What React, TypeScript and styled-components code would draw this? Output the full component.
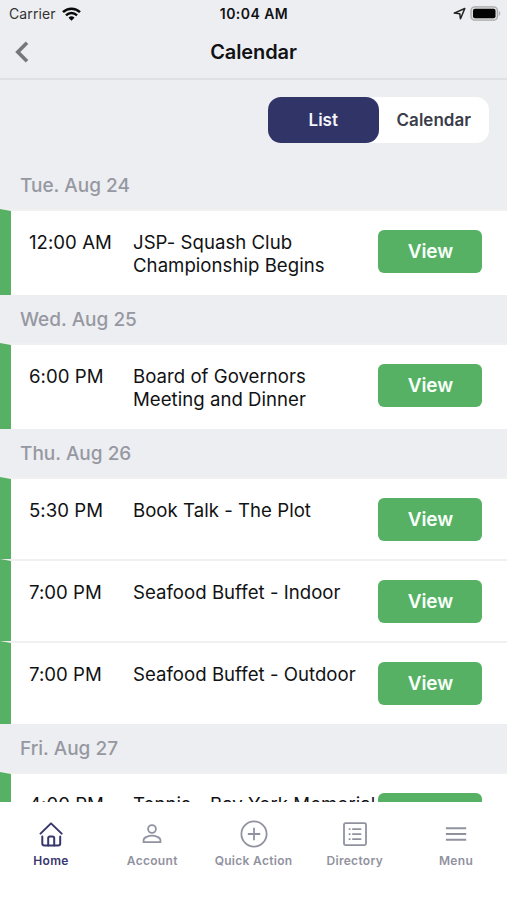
import React from "react";
import styled, { createGlobalStyle } from "styled-components";

const GlobalStyle = createGlobalStyle`
  * { box-sizing: border-box; }
  body { margin: 0; background: #fff; }
  button { border: 0; padding: 0; margin: 0; background: none; font: inherit; color: inherit; }
`;

const Screen = styled.div`
  width: 507px;
  height: 900px;
  display: flex;
  flex-direction: column;
  overflow: hidden;
  background: #edeef2;
  color: #111214;
  font-family: Inter, "Liberation Sans", sans-serif;
`;

const StatusBar = styled.div`
  height: 27px;
  flex: none;
  display: grid;
  grid-template-columns: 1fr auto 1fr;
  align-items: center;
  padding: 0 6px 0 9px;
  font-size: 14px;
`;

const Carrier = styled.div`
  display: flex;
  align-items: center;
  gap: 6px;
  color: #333;
  letter-spacing: 0.12px;
`;

const Clock = styled.div`
  margin-right: 2px;
  font-weight: 600;
  font-size: 14px;
  letter-spacing: 0.45px;
`;

const Indicators = styled.div`
  display: flex;
  align-items: center;
  justify-content: flex-end;
  gap: 4px;
`;

const NavBar = styled.header`
  height: 53px;
  flex: none;
  display: grid;
  grid-template-columns: 60px 1fr 60px;
  align-items: center;
  padding-bottom: 2px;
  border-bottom: 2px solid #dfe0e4;
`;

const BackButton = styled.button`
  display: flex;
  padding-left: 14px;
`;

const Title = styled.h1`
  margin: 0;
  text-align: center;
  font-size: 20px;
  font-weight: 600;
  letter-spacing: -0.1px;
`;

const Toolbar = styled.div`
  height: 81px;
  flex: none;
  display: flex;
  justify-content: flex-end;
  align-items: flex-start;
  padding: 17px 18px 0 0;
`;

const Segments = styled.div`
  display: flex;
  width: 221px;
  height: 46px;
  border-radius: 13px;
  background: #fff;
`;

const Segment = styled.button<{ $selected?: boolean }>`
  flex: 1;
  border-radius: 13px;
  background: ${(p) => (p.$selected ? "#313467" : "transparent")};
  color: ${(p) => (p.$selected ? "#f4f4fa" : "#3b3c49")};
  font-size: 17px;
  font-weight: 600;
`;

const Agenda = styled.main`
  flex: 1;
  min-height: 0;
  overflow: hidden;
`;

const DayHeading = styled.h2`
  margin: 0;
  height: 48px;
  padding-left: 20px;
  font-size: 19px;
  font-weight: 500;
  line-height: 49px;
  color: #9698a1;
`;

const EventRow = styled.article<{ $tall: boolean }>`
  height: ${(p) => (p.$tall ? "86px" : "82.2px")};
  display: grid;
  grid-template-columns: 104px 245.4px 104px;
  align-items: start;
  padding: 19px 0 0 18px;
  background: #fff;
  border-left: 11px solid #56b164;
  border-top: 2px solid #f0f0f1;
`;

const EventText = styled.div`
  padding-top: 0.8px;
  font-size: 18.6px;
  line-height: 23px;
  letter-spacing: 0.03px;
  white-space: pre;
`;

const ViewButton = styled.button`
  height: 43px;
  border-radius: 6px;
  background: #56b164;
  color: #f9fffa;
  font-size: 19px;
  font-weight: 600;
  letter-spacing: -0.1px;
`;

const TabBar = styled.nav`
  height: 98px;
  flex: none;
  display: grid;
  grid-template-columns: repeat(5, 101.25px);
  align-items: start;
  padding: 17px 0 0 0.4px;
  background: #fff;
`;

const Tab = styled.button<{ $active?: boolean }>`
  display: flex;
  flex-direction: column;
  align-items: center;
  gap: 4px;
  color: ${(p) => (p.$active ? "#37366d" : "#9192a0")};
  font-size: 12px;
  font-weight: 600;
  line-height: 16px;
  letter-spacing: 0.3px;
  white-space: nowrap;
`;

const TabIcon = styled.svg`
  width: 30px;
  height: 30px;
  fill: none;
  stroke: currentColor;
  stroke-width: 1.8;
`;

const WifiIcon = () => (
  <svg width="19" height="14" viewBox="0 0 19 14" fill="none" stroke="#090909" strokeWidth="2.5">
    <path d="M1 5.1a12.2 12.2 0 0 1 17 0" />
    <path d="M4 8.3a8 8 0 0 1 11 0" />
    <path d="M9.5 13.7 6.5 10.7a4.4 4.4 0 0 1 6 0Z" fill="#090909" stroke="none" />
  </svg>
);

const LocationIcon = () => (
  <svg width="13" height="13" viewBox="0 0 13 13" fill="none" stroke="#222" strokeWidth="1.5" strokeLinejoin="round">
    <path d="M1.2 6.1 11.8 1.5 7.5 11.8 6.8 6.8Z" />
  </svg>
);

const BatteryIcon = () => (
  <svg width="31" height="15" viewBox="0 0 31 15">
    <rect x="1" y=".8" width="26.5" height="13.4" rx="3.8" fill="#ddd" stroke="#a9a9ab" strokeWidth="1.3" />
    <rect x="3" y="2.8" width="22.5" height="9.5" rx="2" fill="#050505" />
    <path d="M28.8 5v5c2-.8 2-4.2 0-5Z" fill="#b3b3b5" />
  </svg>
);

const BackIcon = () => (
  <svg width="16" height="22" viewBox="0 0 16 22" fill="none" stroke="#777779" strokeWidth="3.6">
    <path d="M13 1.8 3.8 11 13 20.2" />
  </svg>
);

const tabs = [
  {
    label: "Home",
    icon: (
      <g strokeWidth="2" strokeLinecap="round" strokeLinejoin="round">
        <path d="M4.5 14.6 15 4.4l10.7 10.2" />
        <path d="M6.3 17.4v7q0 2 2 2h3.9V19.3q0-1.7 1.7-1.7h2.6q1.7 0 1.7 1.7v7.1h4q2 0 2-2v-7" />
        <path d="M12.2 26.4h6" />
      </g>
    ),
  },
  {
    label: "Account",
    icon: (
      <>
        <circle cx="15" cy="10" r="3.9" />
        <path d="M6.6 23.2v-2.1c0-2.9 5.2-4.4 8.4-4.4s8.4 1.5 8.4 4.4v2.1Z" />
      </>
    ),
  },
  {
    label: "Quick Action",
    icon: (
      <>
        <circle cx="15" cy="15" r="12.6" />
        <path d="M15 8.8v12.4M8.8 15h12.4" />
      </>
    ),
  },
  {
    label: "Directory",
    icon: (
      <>
        <rect x="4" y="4.1" width="22" height="22" rx="1.5" />
        <path d="M8.7 10.2h1.8M8.7 15.2h1.8M8.7 20.1h1.8M12.2 10.2h9.1M12.2 15.2h9.1M12.2 20.1h9.1" />
      </>
    ),
  },
  {
    label: "Menu",
    icon: <path d="M4.9 9.2h20.3M4.9 15h20.3M4.9 20.7h20.3" strokeWidth="2" />,
  },
];

const days = [
  { date: "Tue. Aug 24", events: [{ time: "12:00 AM", name: "JSP- Squash Club\nChampionship Begins" }] },
  { date: "Wed. Aug 25", events: [{ time: "6:00 PM", name: "Board of Governors\nMeeting and Dinner" }] },
  {
    date: "Thu. Aug 26",
    events: [
      { time: "5:30 PM", name: "Book Talk - The Plot" },
      { time: "7:00 PM", name: "Seafood Buffet - Indoor" },
      { time: "7:00 PM", name: "Seafood Buffet - Outdoor" },
    ],
  },
  { date: "Fri. Aug 27", events: [{ time: "4:00 PM", name: "Tennis - Bay York Memorial" }] },
];

export default function App() {
  return (
    <Screen>
      <GlobalStyle />
      <StatusBar>
        <Carrier>
          Carrier
          <WifiIcon />
        </Carrier>
        <Clock>10:04 AM</Clock>
        <Indicators>
          <LocationIcon />
          <BatteryIcon />
        </Indicators>
      </StatusBar>
      <NavBar>
        <BackButton aria-label="Back">
          <BackIcon />
        </BackButton>
        <Title>Calendar</Title>
      </NavBar>
      <Toolbar>
        <Segments>
          <Segment $selected>List</Segment>
          <Segment>Calendar</Segment>
        </Segments>
      </Toolbar>
      <Agenda>
        {days.map((day) => (
          <section key={day.date}>
            <DayHeading>{day.date}</DayHeading>
            {day.events.map((event) => (
              <EventRow key={event.name} $tall={event.name.includes("\n")}>
                <EventText>{event.time}</EventText>
                <EventText>{event.name}</EventText>
                <ViewButton>View</ViewButton>
              </EventRow>
            ))}
          </section>
        ))}
      </Agenda>
      <TabBar>
        {tabs.map((tab) => (
          <Tab key={tab.label} $active={tab.label === "Home"}>
            <TabIcon viewBox="0 0 30 30">{tab.icon}</TabIcon>
            {tab.label}
          </Tab>
        ))}
      </TabBar>
    </Screen>
  );
}
